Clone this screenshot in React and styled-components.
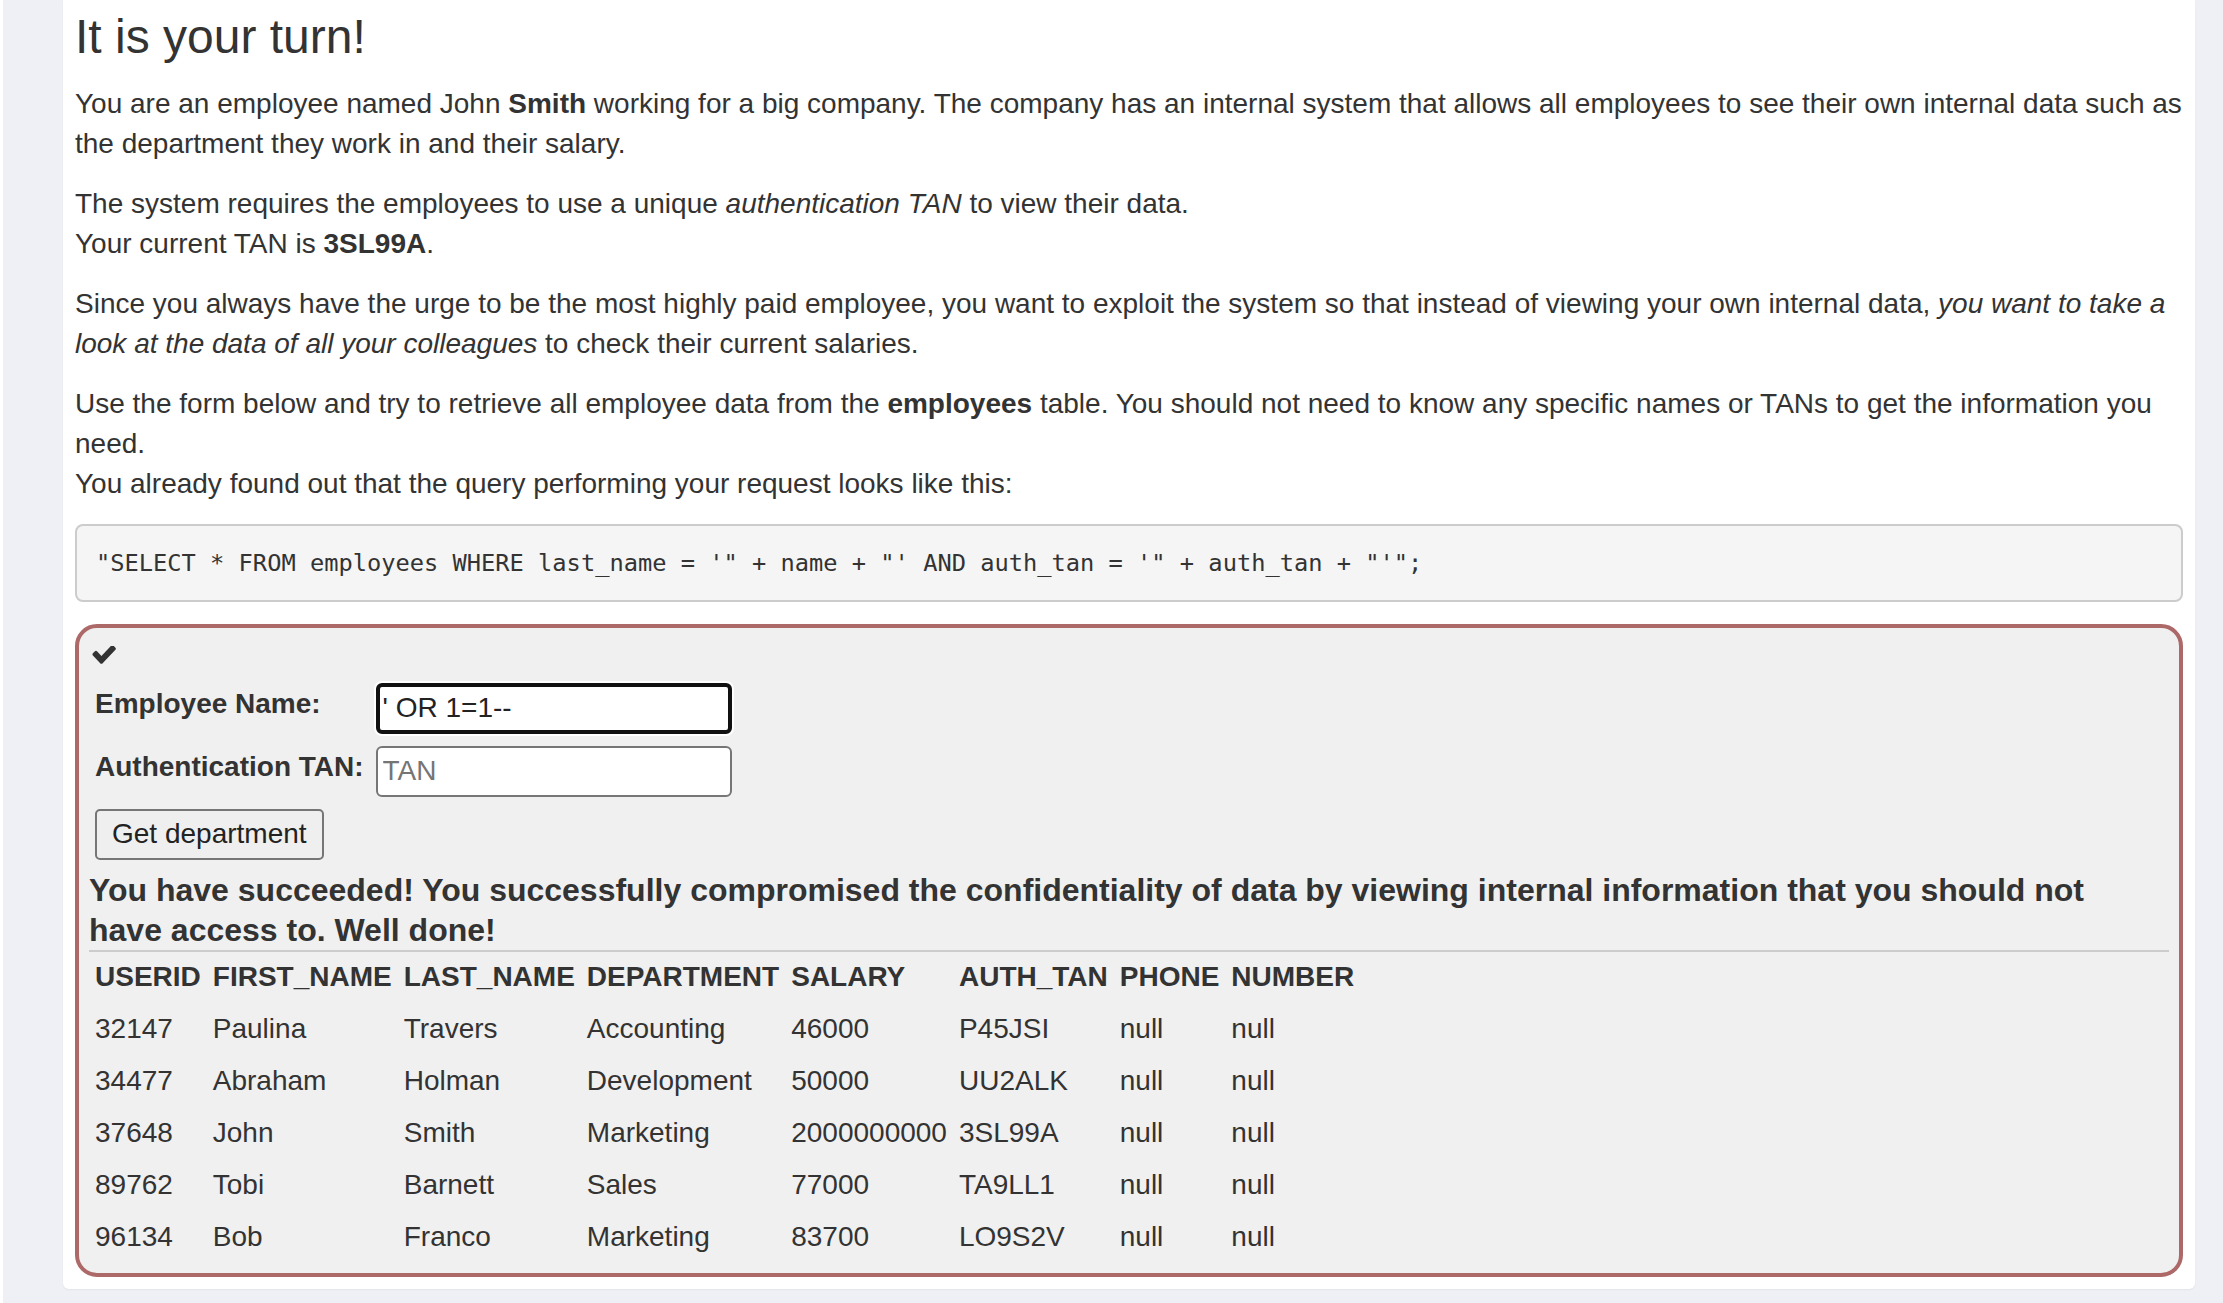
import React from "react";
import styled, { createGlobalStyle } from "styled-components";

const GlobalStyle = createGlobalStyle`
  html, body {
    margin: 0;
    padding: 0;
    background: #eef0f5;
  }
  body {
    font-family: "Liberation Sans", Arial, sans-serif;
    color: #333;
  }
  * { box-sizing: border-box; }
`;

const Page = styled.div`
  min-height: 1303px;
  border-left: 3px solid #fff;
  padding: 0 28px 15px 60px;
`;

const Panel = styled.main`
  background: #fff;
  border-radius: 0 0 6px 6px;
  box-shadow: 0 1px 2px rgba(0, 0, 0, 0.05);
  padding: 11px 12px 12px 12px;
`;

const Title = styled.h2`
  margin: 0 0 20px;
  font-size: 48px;
  line-height: 1.1;
  font-weight: 400;
  color: #333;
`;

const Para = styled.p`
  margin: 0 0 20px;
  font-size: 28px;
  line-height: 40px;
`;

const Code = styled.pre`
  margin: 2px 0 22px;
  padding: 18px 19px;
  border: 2px solid #ccc;
  border-radius: 8px;
  background: #f5f5f5;
  font-family: "DejaVu Sans Mono", "Liberation Mono", monospace;
  font-size: 23.7px;
  line-height: 38px;
  color: #333;
  white-space: pre;
  overflow: hidden;
`;

const AttackBox = styled.section`
  border: 4px solid #ad6868;
  border-radius: 22px;
  background: #f0f0f0;
  padding: 8px 10px 8px 10px;
`;

const CheckRow = styled.div`
  height: 39px;
  display: flex;
  align-items: center;
  padding-left: 3px;
  color: #333;
`;

const CheckIcon = styled.svg`
  width: 24px;
  height: 18px;
  display: block;
`;

const FormTable = styled.table`
  border-collapse: separate;
  border-spacing: 4px;
  margin-left: -2px;
  td {
    padding: 4px;
    vertical-align: middle;
  }
`;

const Label = styled.td`
  font-size: 28px;
  font-weight: 700;
  line-height: 40px;
  white-space: nowrap;
  && {
    vertical-align: top;
    padding-top: 5px;
  }
`;

const Input = styled.input`
  width: 356px;
  height: 51px;
  display: block;
  font-family: "Liberation Sans", Arial, sans-serif;
  font-size: 28px;
  color: #222;
  background: #fff;
  border-radius: 6px;
  margin: 0;
  border: ${(p) => (p.$focused ? "4px solid #111" : "2px solid #767676")};
  padding: ${(p) => (p.$focused ? "0 3px" : "0 5px")};
  box-shadow: ${(p) => (p.$focused ? "0 0 0 2px #fff" : "none")};
  outline: none;
  &::placeholder {
    color: #757575;
  }
`;

const Button = styled.button`
  height: 51px;
  display: block;
  padding: 0 15px;
  font-family: "Liberation Sans", Arial, sans-serif;
  font-size: 28px;
  color: #222;
  background: #efefef;
  border: 2px solid #767676;
  border-radius: 5px;
`;

const Feedback = styled.div`
  margin-top: 2px;
  font-size: 32px;
  font-weight: 700;
  line-height: 40px;
  padding-right: 10px;
  color: #333;
`;

const Rule = styled.hr`
  margin: 0;
  border: 0;
  border-top: 2px solid #ccc;
`;

const ResultTable = styled.table`
  border-collapse: separate;
  border-spacing: 4px;
  margin: -3px 0 0 -2px;
  font-size: 28px;
  line-height: 40px;
  color: #333;
  th, td {
    padding: 4px;
    text-align: left;
    white-space: nowrap;
  }
  th {
    font-weight: 700;
  }
  td {
    font-weight: 400;
  }
`;

const headers = ["USERID", "FIRST_NAME", "LAST_NAME", "DEPARTMENT", "SALARY", "AUTH_TAN", "PHONE", "NUMBER"];
const rows = [
  ["32147", "Paulina", "Travers", "Accounting", "46000", "P45JSI", "null", "null"],
  ["34477", "Abraham", "Holman", "Development", "50000", "UU2ALK", "null", "null"],
  ["37648", "John", "Smith", "Marketing", "2000000000", "3SL99A", "null", "null"],
  ["89762", "Tobi", "Barnett", "Sales", "77000", "TA9LL1", "null", "null"],
  ["96134", "Bob", "Franco", "Marketing", "83700", "LO9S2V", "null", "null"],
];

export default function App() {
  return (
    <>
      <GlobalStyle />
      <Page>
        <Panel>
          <Title>It is your turn!</Title>
          <Para>
            You are an employee named John <b>Smith</b> working for a big company. The company has an internal system that allows all employees to see their own internal data such as the department they work in and their salary.
          </Para>
          <Para>
            The system requires the employees to use a unique <i>authentication TAN</i> to view their data.
            <br />
            Your current TAN is <b>3SL99A</b>.
          </Para>
          <Para>
            Since you always have the urge to be the most highly paid employee, you want to exploit the system so that instead of viewing your own internal data, <i>you want to take a look at the data of all your colleagues</i> to check their current salaries.
          </Para>
          <Para>
            Use the form below and try to retrieve all employee data from the <b>employees</b> table. You should not need to know any specific names or TANs to get the information you need.
            <br />
            You already found out that the query performing your request looks like this:
          </Para>
          <Code>{`"SELECT * FROM employees WHERE last_name = '" + name + "' AND auth_tan = '" + auth_tan + "'";`}</Code>
          <AttackBox>
            <CheckRow>
              <CheckIcon viewBox="90 395 1590 1135" fill="currentColor" preserveAspectRatio="none">
                <path d="M1671 566q0 40-28 68l-724 724-136 136q-28 28-68 28t-68-28l-136-136-362-362q-28-28-28-68t28-68l136-136q28-28 68-28t68 28l294 295 656-657q28-28 68-28t68 28l136 136q28 28 28 68z" />
              </CheckIcon>
            </CheckRow>
            <FormTable>
              <tbody>
                <tr>
                  <Label>Employee Name:</Label>
                  <td>
                    <Input $focused defaultValue="' OR 1=1--" />
                  </td>
                </tr>
                <tr>
                  <Label>Authentication TAN:</Label>
                  <td>
                    <Input placeholder="TAN" />
                  </td>
                </tr>
                <tr>
                  <td>
                    <Button type="button">Get department</Button>
                  </td>
                </tr>
              </tbody>
            </FormTable>
            <Feedback>
              You have succeeded! You successfully compromised the confidentiality of data by viewing internal information that you should not have access to. Well done!
            </Feedback>
            <Rule />
            <ResultTable>
              <tbody>
                <tr>
                  {headers.map((h) => (
                    <th key={h}>{h}</th>
                  ))}
                </tr>
                {rows.map((r) => (
                  <tr key={r[0]}>
                    {r.map((c, i) => (
                      <td key={i}>{c}</td>
                    ))}
                  </tr>
                ))}
              </tbody>
            </ResultTable>
          </AttackBox>
        </Panel>
      </Page>
    </>
  );
}
